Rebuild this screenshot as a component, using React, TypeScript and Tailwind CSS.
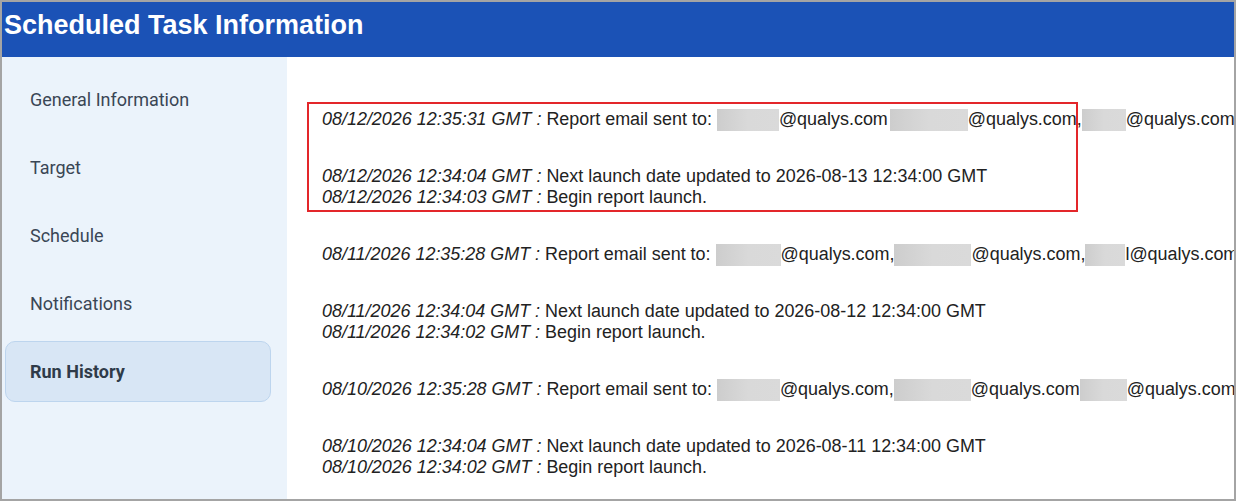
const navItems = [
  "General Information",
  "Target",
  "Schedule",
  "Notifications",
  "Run History",
];

type Piece = { text?: string; blur?: number; gap?: number };

const Redacted: React.FC<{ width: number; gap?: number }> = (props) => {
  return (
    <span
      className="inline-block h-[22px] align-top bg-gradient-to-r from-[#cdcdcd] via-[#d9d9d9] to-[#dadada]"
      style={{ width: props.width, marginLeft: props.gap ?? 0 }}
    />
  );
};

type Entry = { time: string; text?: string; emails?: Piece[] }[];

const entries: Entry[] = [
  [
    {
      time: "08/12/2026 12:35:31 GMT :",
      emails: [
        { blur: 62 },
        { text: "@qualys.com" },
        { blur: 78, gap: 2 },
        { text: "@qualys.com," },
        { blur: 44 },
        { text: "@qualys.com" },
      ],
    },
  ],
  [
    {
      time: "08/12/2026 12:34:04 GMT :",
      text: "Next launch date updated to 2026-08-13 12:34:00 GMT",
    },
    { time: "08/12/2026 12:34:03 GMT :", text: "Begin report launch." },
  ],
  [
    {
      time: "08/11/2026 12:35:28 GMT :",
      emails: [
        { blur: 65 },
        { text: "@qualys.com," },
        { blur: 77 },
        { text: "@qualys.com," },
        { blur: 40 },
        { text: "l@qualys.com," },
      ],
    },
  ],
  [
    {
      time: "08/11/2026 12:34:04 GMT :",
      text: "Next launch date updated to 2026-08-12 12:34:00 GMT",
    },
    { time: "08/11/2026 12:34:02 GMT :", text: "Begin report launch." },
  ],
  [
    {
      time: "08/10/2026 12:35:28 GMT :",
      emails: [
        { blur: 63 },
        { text: "@qualys.com," },
        { blur: 77 },
        { text: "@qualys.com" },
        { blur: 47 },
        { text: "@qualys.com" },
      ],
    },
  ],
  [
    {
      time: "08/10/2026 12:34:04 GMT :",
      text: "Next launch date updated to 2026-08-11 12:34:00 GMT",
    },
    { time: "08/10/2026 12:34:02 GMT :", text: "Begin report launch." },
  ],
];

const App = () => {
  const active = "Run History";

  return (
    <div className="w-[1236px] h-[501px] border-2 border-[#a4a4a4] overflow-hidden flex flex-col bg-white">
      <div className="h-[55px] shrink-0 bg-[#1b52b6] flex items-center pl-[2px] pb-[9px]">
        <h1 className="text-white font-bold text-[27px] leading-none font-['Liberation_Sans',Arial,sans-serif]">
          Scheduled Task Information
        </h1>
      </div>
      <div className="flex flex-1 min-h-0">
        <div className="w-[285px] shrink-0 bg-[#ebf3fb] pt-[8px] pl-[3px] font-['Roboto',sans-serif]">
          {navItems.map((item) => (
            <div key={item} className="h-[68px] py-[3.5px]">
              <div
                className={
                  item === active
                    ? "w-[266px] h-[61px] rounded-[10px] bg-[#d8e6f5] border border-[#bdd5ee] flex items-center pl-[24px] text-[18px] font-bold text-[#2f3b49]"
                    : "w-[266px] h-[61px] flex items-center pl-[25px] text-[18px] text-[#3a4655]"
                }
              >
                {item}
              </div>
            </div>
          ))}
        </div>
        <div className="relative flex-1 min-w-0 overflow-hidden pl-[35px] pt-[51.5px] font-['Liberation_Sans',Arial,sans-serif] text-[17.95px] leading-[21px] text-[#222222]">
          <div className="absolute left-[20px] top-[45px] w-[771px] h-[110px] border-2 border-[#e3262a]" />
          <div className="flex flex-col gap-[35.5px]">
            {entries.map((entry, i) => (
              <div key={i}>
                {entry.map((line) => (
                  <div key={line.time} className="whitespace-nowrap">
                    <span className="italic">{line.time}</span>{" "}
                    {line.text && <span>{line.text}</span>}
                    {line.emails && (
                      <>
                        <span>Report email sent to: </span>
                        {line.emails.map((p, k) =>
                          p.blur ? (
                            <Redacted key={k} width={p.blur} gap={p.gap} />
                          ) : (
                            <span key={k}>{p.text}</span>
                          )
                        )}
                      </>
                    )}
                  </div>
                ))}
              </div>
            ))}
          </div>
        </div>
      </div>
    </div>
  );
};

export default App;
